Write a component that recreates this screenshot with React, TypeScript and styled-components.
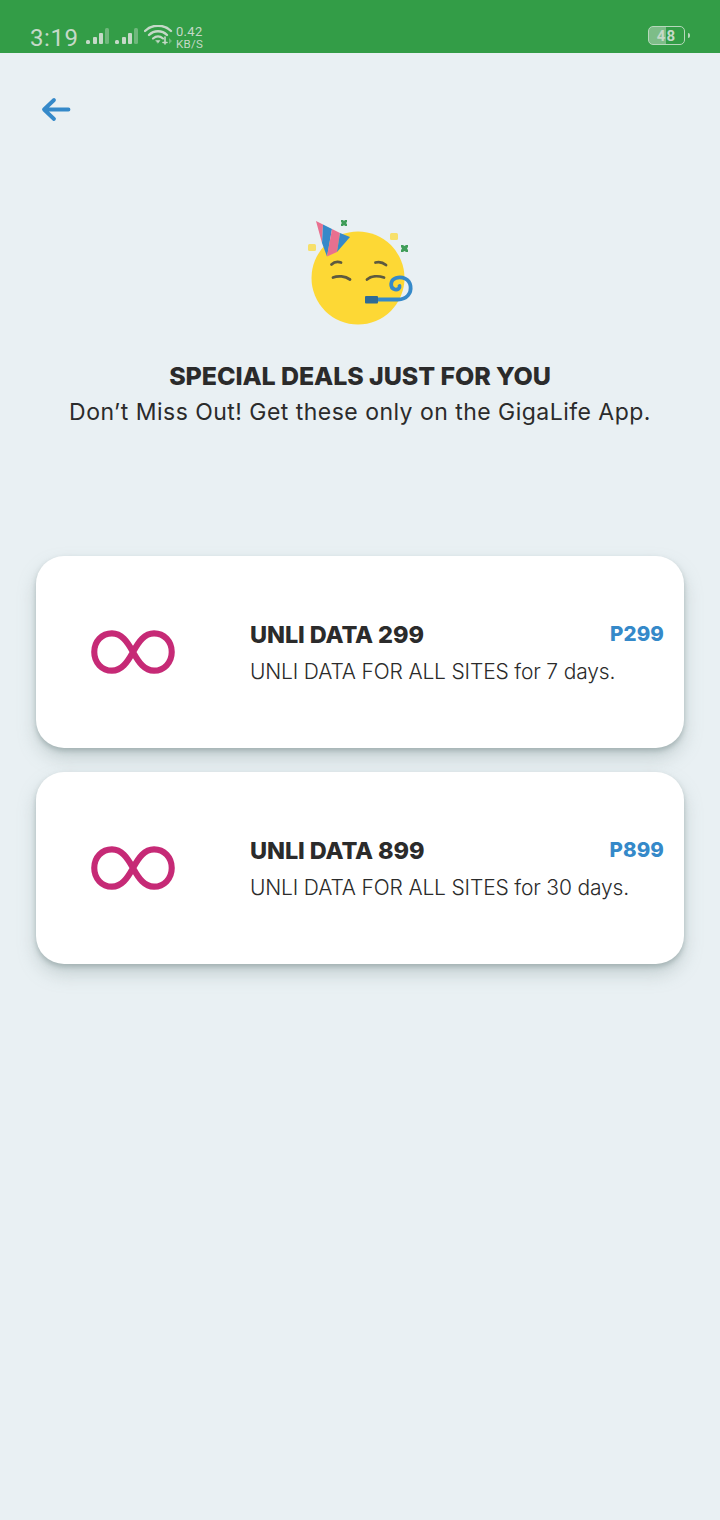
import React from "react";
import styled, { createGlobalStyle } from "styled-components";

const Global = createGlobalStyle`
  html, body { margin: 0; padding: 0; background: #e9f0f3; }
  body { font-family: "Inter", "Noto Sans", sans-serif; color: #2b2b2b; }
`;
const Page = styled.div`
  width: 720px; height: 1520px; background: #e9f0f3; display: flex; flex-direction: column; overflow: hidden;
`;
const StatusBar = styled.div`
  height: 53px; flex: none; background: #339d47; display: flex; align-items: flex-end; box-sizing: border-box;
  padding: 0 35px 1px 30px; color: #c5d9c8; font-family: "Roboto", sans-serif;
`;
const Clock = styled.span`
  font-size: 24px; line-height: 28px; letter-spacing: .6px; width: 54px; margin-right: 2px;
`;
const StatusIcons = styled.div`
  display: flex; align-items: flex-end; gap: 5px; margin-bottom: 7px;
`;
const Speed = styled.div`
  display: flex; flex-direction: column; font-size: 13px; line-height: 13px; margin: 0 0 2px 2px; letter-spacing: .3px;
  & > span + span { font-size: 11.5px; line-height: 12px; }
`;
const Spacer = styled.div`flex: 1;`;
const Battery = styled.div`
  width: 37px; height: 19px; box-sizing: border-box; border: 1px solid #b7d8bc; border-radius: 5px; margin: 0 0 7px 0;
  display: flex; align-items: center; justify-content: center; font-size: 15px; font-weight: 700; letter-spacing: 1.2px;
  background: linear-gradient(90deg, #7dbd88 0 48%, transparent 48%);
  position: relative;
  &::after { content: ""; position: absolute; right: -6px; top: 6px; width: 2px; height: 5px; background: #b7d8bc; border-radius: 0 2px 2px 0; }
`;
const BackButton = styled.div`
  height: 26px; margin: 44px 0 0 41px; display: flex;
`;
const Hero = styled.div`
  display: flex; flex-direction: column; align-items: center; margin-top: 82px;
`;
const Title = styled.h1`
  margin: 24px 0 0; font-size: 25px; line-height: 34px; font-weight: 800; color: #2b2b2b; letter-spacing: -.1px;
`;
const Subtitle = styled.p`
  margin: 4px 0 0; font-size: 23px; line-height: 30px; font-weight: 400; color: #2b2b2b; letter-spacing: .47px; white-space: nowrap;
`;
const Deals = styled.div`
  display: flex; flex-direction: column; gap: 24px; margin: 129px 36px 0;
`;
const Card = styled.div`
  height: 192px; background: #fff; border-radius: 28px; display: flex; box-sizing: border-box;
  box-shadow: 0 3px 5px rgba(120,140,140,.45), 0 10px 18px rgba(130,150,150,.35);
  padding: 62px 20px 0 53px;
`;
const Logo = styled.div`
  width: 161px; flex: none; padding-top: 12px;
`;
const Info = styled.div`flex: 1; min-width: 0;`;
const Heading = styled.div`
  display: flex; justify-content: space-between; align-items: flex-start;
`;
const Name = styled.span`
  font-size: 23.5px; line-height: 34px; font-weight: 800; color: #2b2b2b; letter-spacing: -.1px;
`;
const Price = styled.span`
  font-size: 20.5px; line-height: 32px; font-weight: 800; color: #3589c9; letter-spacing: .1px;
`;
const Desc = styled.div`
  font-size: 21px; line-height: 30px; font-weight: 300; color: #2b2b2b; margin-top: 5px; letter-spacing: -.16px; white-space: nowrap;
`;

const Signal = () => (
  <svg width="24" height="18" viewBox="0 0 24 18">
    <rect x="0" y="13" width="4" height="4" rx="1.5" fill="#c5d9c8" />
    <rect x="7" y="10" width="4" height="7" rx="1" fill="#c5d9c8" />
    <rect x="13" y="6" width="4" height="11" rx="1" fill="#c5d9c8" />
    <rect x="19" y="1" width="4" height="16" rx="1.5" fill="#6fb87c" />
  </svg>
);
const Wifi = () => (
  <svg width="30" height="20" viewBox="0 0 30 20" fill="none" stroke="#c5d9c8" strokeLinecap="round">
    <path d="M1 6 C8 -1 20 -1 27 6" strokeWidth="2.4" />
    <path d="M5 10 C10 5 18 5 23 10" strokeWidth="2.4" />
    <path d="M9 13.5 C12 11 16 11 19 13.5" strokeWidth="2.2" />
    <path d="M12 15.5h4l-2 2.5z" fill="#c5d9c8" strokeWidth="0.5" />
    <path d="M21 12v7M19 17.5h4" strokeWidth="1.6" />
    <path d="M25 13l3 3-3 3z" fill="#6fb87c" stroke="none" />
  </svg>
);
const Back = () => (
  <svg width="30" height="26" viewBox="0 0 30 26" fill="none" stroke="#3589c9" strokeWidth="3.8" strokeLinecap="round" strokeLinejoin="round">
    <path d="M27.500 12.500H4M13 3 3 12.500 13 22" />
  </svg>
);
const Party = () => (
  <svg width="140" height="130" viewBox="0 0 140 130">
    <rect x="18" y="39" width="8" height="7" rx="1.500" fill="#f7e06a" />
    <rect x="100" y="28" width="8" height="7" rx="1.500" fill="#f7e06a" />
    <path d="M51 15h2l1 1 1-1h2v2l-1 1 1 1v2h-2l-1-1-1 1h-2v-2l1-1-1-1z" fill="#3f9d58" />
    <path d="M111 40h2l1.500 1 1.500-1h2v2l-1 1.500 1 1.500v2h-2l-1.500-1-1.500 1h-2v-2l1-1.500-1-1.500z" fill="#3f9d58" />
    <circle cx="68" cy="73" r="46.500" fill="#fdd835" />
    <path d="M26 16 33 19.500 32 38Z" fill="#e8708f" />
    <path d="M33 19.500 42 24 37 51.500 32 38Z" fill="#3589c9" />
    <path d="M42 24 50 28 47 47 37 51.500Z" fill="#e8708f" />
    <path d="M50 28 60 32 47 47Z" fill="#3589c9" />
    <g fill="none" stroke="#5d5a3f" strokeWidth="2.800" strokeLinecap="round">
      <path d="M41.500 59.500C44 57 48 56.500 51 57.500" />
      <path d="M85.500 57.500C89 56.500 93 57.500 96 60" />
      <path d="M43 72.500C48 70.500 55 71 60 74.500" />
      <path d="M77 74.500C81 71 88 70.500 94 72.500" />
    </g>
    <path d="M86 94.500H108C117 94.500 121.500 88 120.500 81C119.500 74 112 71 106 73C100 75 99.500 83 105 84.500C108 85 110 83 109.500 81" fill="none" stroke="#3589c9" strokeWidth="3.800" strokeLinecap="round" />
    <rect x="75" y="91" width="13" height="7.500" rx="1" fill="#2f6b95" />
  </svg>
);
const Infinity8 = () => (
  <svg width="88" height="44" viewBox="0 0 88 46" fill="none" stroke="#c62a76" strokeWidth="6.400">
    <path d="M44 23C38 12 32 3.500 22 3.500C11.500 3.500 3.500 12 3.500 23C3.500 34 11.500 42.500 22 42.500C32 42.500 38 34 44 23C50 12 56 3.500 66 3.500C76.500 3.500 84.500 12 84.500 23C84.500 34 76.500 42.500 66 42.500C56 42.500 50 34 44 23Z" />
  </svg>
);

const deals = [
  { name: "UNLI DATA 299", price: "P299", desc: "UNLI DATA FOR ALL SITES for 7 days." },
  { name: "UNLI DATA 899", price: "P899", desc: "UNLI DATA FOR ALL SITES for 30 days." },
];

export default function App() {
  return (
    <Page>
      <Global />
      <StatusBar>
        <Clock>3:19</Clock>
        <StatusIcons>
          <Signal />
          <Signal />
          <Wifi />
        </StatusIcons>
        <Speed><span>0.42</span><span>KB/S</span></Speed>
        <Spacer />
        <Battery>48</Battery>
      </StatusBar>
      <BackButton><Back /></BackButton>
      <Hero>
        <Party />
        <Title>SPECIAL DEALS JUST FOR YOU</Title>
        <Subtitle>Don’t Miss Out! Get these only on the GigaLife App.</Subtitle>
      </Hero>
      <Deals>
        {deals.map((d) => (
          <Card key={d.name}>
            <Logo><Infinity8 /></Logo>
            <Info>
              <Heading><Name>{d.name}</Name><Price>{d.price}</Price></Heading>
              <Desc>{d.desc}</Desc>
            </Info>
          </Card>
        ))}
      </Deals>
    </Page>
  );
}
